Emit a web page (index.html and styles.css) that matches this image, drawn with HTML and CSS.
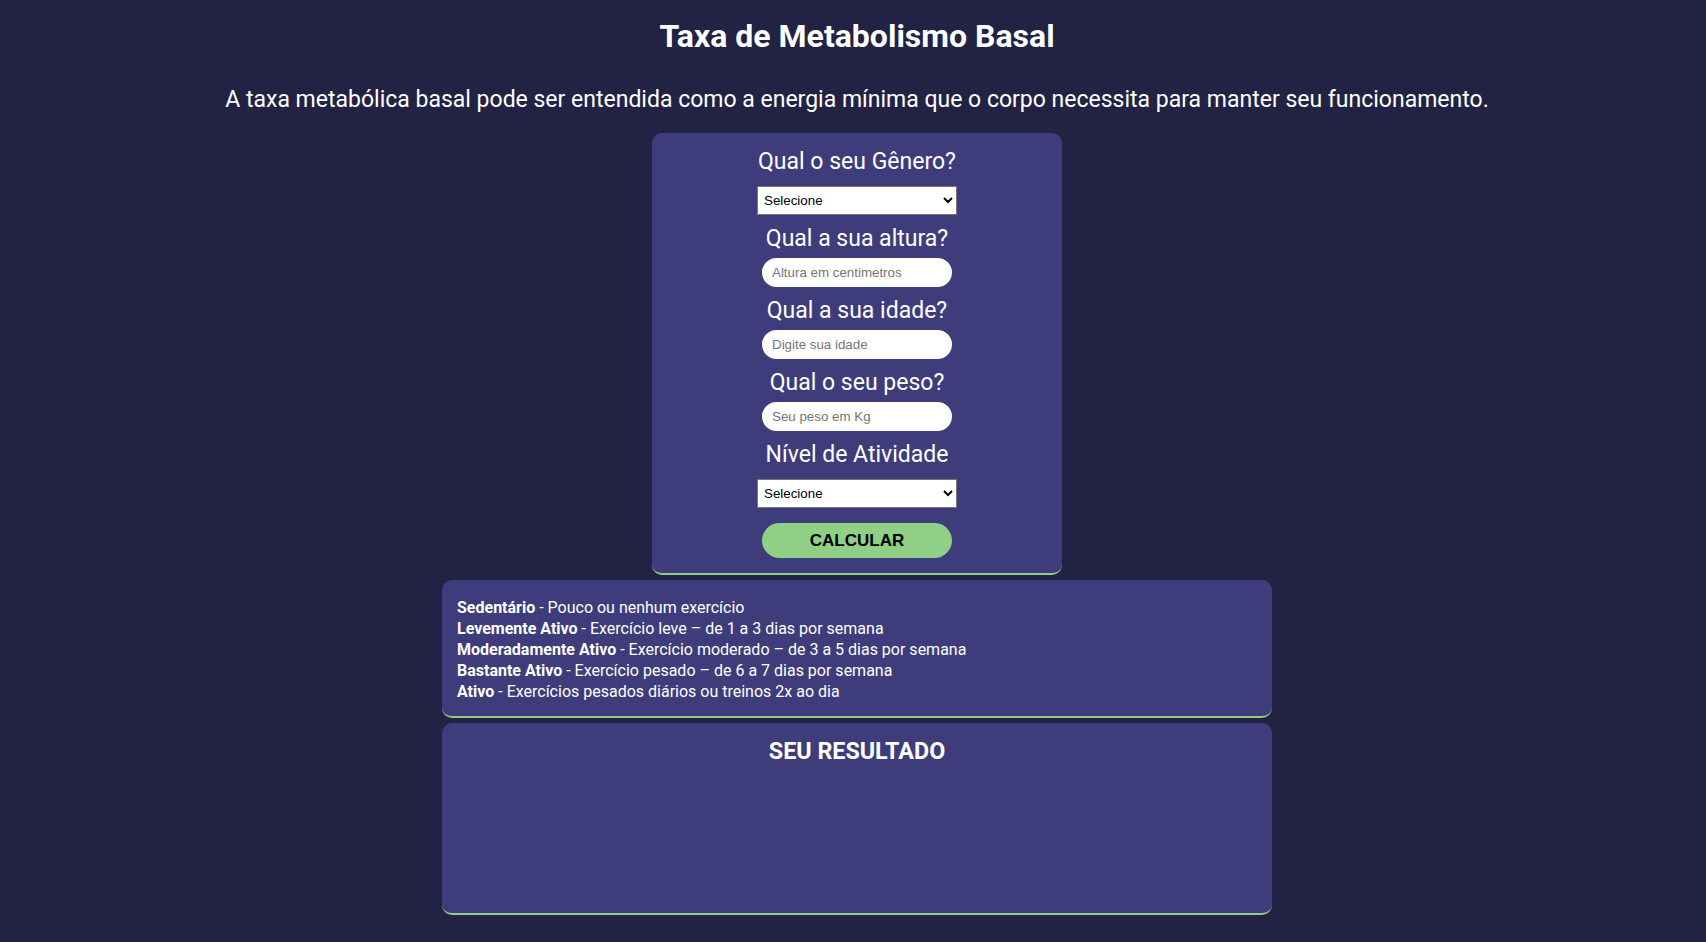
FILE: index.html
```html
<!DOCTYPE html>
<html lang="pt-BR">
<head>
<meta charset="utf-8">
<title>Taxa de Metabolismo Basal</title>
<link rel="stylesheet" href="styles.css">
</head>
<body>
<div class="page">
  <h1 class="title">Taxa de Metabolismo Basal</h1>
  <p class="subtitle">A taxa metabólica basal pode ser entendida como a energia mínima que o corpo necessita para manter seu funcionamento.</p>

  <form class="card form-card">
    <label class="q q-first" for="genero">Qual o seu Gênero?</label>
    <select id="genero" class="sel">
      <option>Selecione</option>
      <option>Masculino</option>
      <option>Feminino</option>
    </select>

    <label class="q" for="altura">Qual a sua altura?</label>
    <input id="altura" class="field" type="text" placeholder="Altura em centimetros">

    <label class="q" for="idade">Qual a sua idade?</label>
    <input id="idade" class="field" type="text" placeholder="Digite sua idade">

    <label class="q" for="peso">Qual o seu peso?</label>
    <input id="peso" class="field" type="text" placeholder="Seu peso em Kg">

    <label class="q" for="atividade">Nível de Atividade</label>
    <select id="atividade" class="sel sel-last">
      <option>Selecione</option>
      <option>Sedentário</option>
      <option>Levemente Ativo</option>
      <option>Moderadamente Ativo</option>
      <option>Bastante Ativo</option>
      <option>Ativo</option>
    </select>

    <button type="button" class="btn">CALCULAR</button>
  </form>

  <div class="card info-card">
    <div><b>Sedentário</b> - Pouco ou nenhum exercício</div>
    <div><b>Levemente Ativo</b> - Exercício leve – de 1 a 3 dias por semana</div>
    <div><b>Moderadamente Ativo</b> - Exercício moderado – de 3 a 5 dias por semana</div>
    <div><b>Bastante Ativo</b> - Exercício pesado – de 6 a 7 dias por semana</div>
    <div><b>Ativo</b> - Exercícios pesados diários ou treinos 2x ao dia</div>
  </div>

  <div class="card result-card">
    <h2 class="result-title">SEU RESULTADO</h2>
  </div>
</div>
</body>
</html>
```
FILE: styles.css
```css
html, body {
  margin: 0;
  padding: 0;
  background: #222244;
}

body {
  font-family: Roboto, "Liberation Sans", Arial, sans-serif;
  color: #ffffff;
}

.page {
  padding-left: 8px;
  display: flex;
  flex-direction: column;
  align-items: center;
}

.title {
  margin: 0;
  padding-top: 18px;
  font-size: 32px;
  font-weight: 700;
  line-height: 37.5px;
  text-align: center;
}

.subtitle {
  margin: 30px 0 0;
  font-size: 23px;
  line-height: 28px;
  text-align: center;
}

.card {
  background: #3e3c7a;
  border-radius: 10px;
  border-bottom: 2px solid #8fcf86;
  box-sizing: border-box;
}

.form-card {
  margin-top: 19px;
  width: 410px;
  padding: 15.6px 0 14.3px;
  display: flex;
  flex-direction: column;
  align-items: center;
}

.q {
  display: block;
  margin-top: 10px;
  font-size: 23px;
  line-height: 27.4px;
  text-align: center;
}

.q-first {
  margin-top: 0;
}

.sel {
  margin-top: 10px;
  width: 200px;
  height: 29px;
  box-sizing: border-box;
  font-family: "Liberation Sans", Arial, sans-serif;
  font-size: 13.33px;
  color: #000;
  background: #fff;
  border: 1px solid #767676;
  border-radius: 0;
  padding: 0 2px;
}

.sel-last {
  margin-top: 11px;
}

.field {
  margin-top: 5.6px;
  width: 190px;
  height: 29px;
  box-sizing: border-box;
  border: none;
  border-radius: 15px;
  padding: 0 10px;
  background: #fff;
  font-family: "Liberation Sans", Arial, sans-serif;
  font-size: 13.33px;
  color: #000;
  outline: none;
}

.field::placeholder {
  color: #757575;
}

.btn {
  margin-top: 15.5px;
  width: 190px;
  height: 35px;
  border: none;
  border-radius: 17.5px;
  background: #8fcf86;
  color: #000;
  font-family: "Liberation Sans", Arial, sans-serif;
  font-weight: 700;
  font-size: 17px;
  cursor: pointer;
}

.info-card {
  margin-top: 5px;
  width: 830px;
  padding: 17px 15px 14px;
  font-size: 16px;
  line-height: 21px;
  text-align: left;
}

.info-card b {
  font-weight: 700;
}

.result-card {
  margin-top: 5px;
  width: 830px;
  height: 192px;
  padding-top: 15px;
}

.result-title {
  margin: 0;
  font-size: 23.3px;
  font-weight: 700;
  line-height: 26px;
  text-align: center;
}
```
